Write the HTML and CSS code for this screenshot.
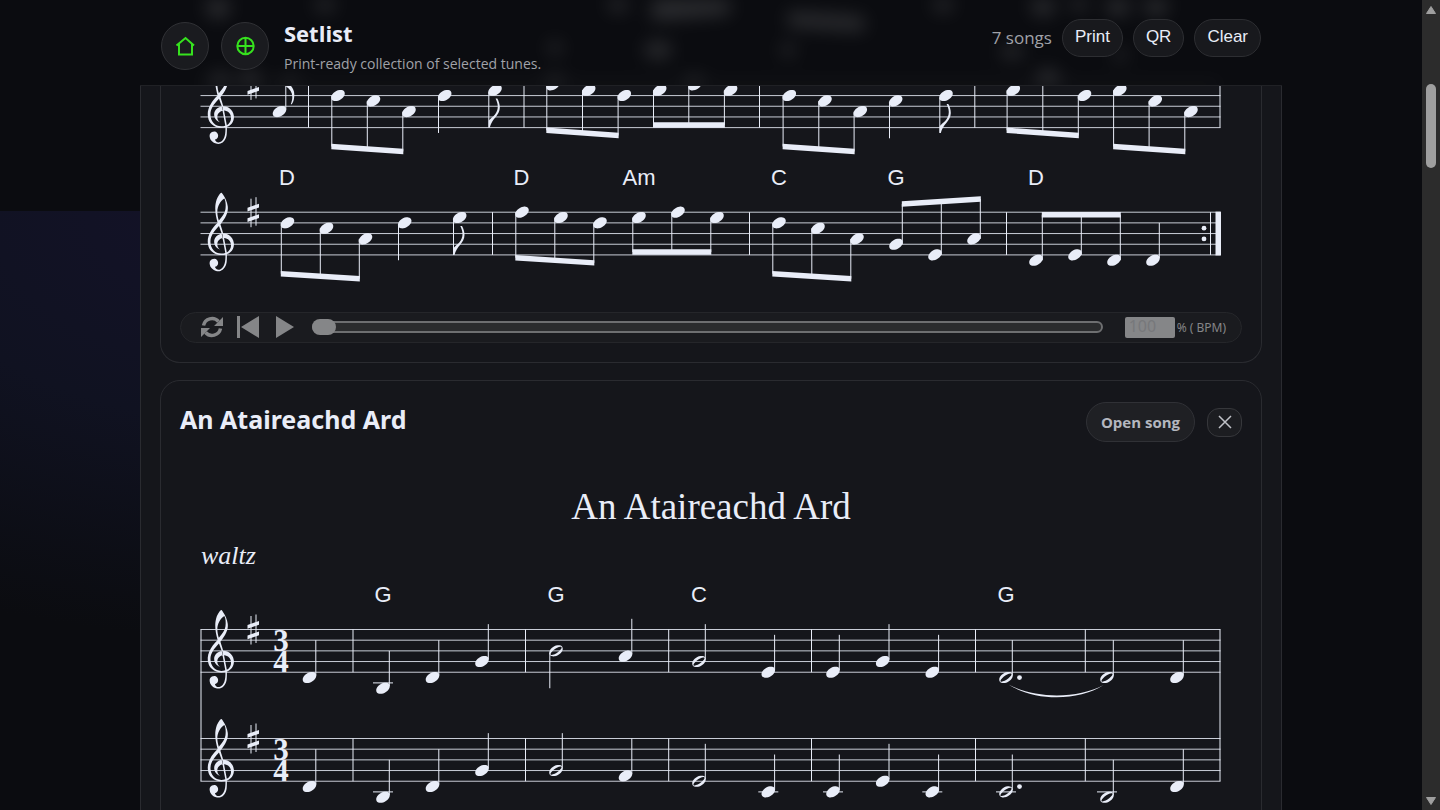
FILE: index.html
```html
<!DOCTYPE html>
<html lang="en">
<head>
  <meta charset="UTF-8">
  <meta name="viewport" content="width=device-width, initial-scale=1.0">
  <title>Setlist</title>
  <link rel="stylesheet" href="styles.css">
</head>
<body>
  <div class="app">
    <header class="topbar">
      <svg class="topbar-glow" viewBox="140 0 1142 85" preserveAspectRatio="none" aria-hidden="true">
        <circle cx="218" cy="6" r="12"/>
        <circle cx="325" cy="2" r="10"/>
        <circle cx="618" cy="2" r="10"/>
        <path d="M652 0h78v14l-78 6z"/>
        <path d="M788 12l76 5v14l-76-5z"/>
        <circle cx="943" cy="2" r="10"/>
        <circle cx="1043" cy="4" r="12"/>
        <circle cx="1079" cy="2" r="9"/>
        <circle cx="1118" cy="4" r="12"/>
        <circle cx="1156" cy="4" r="12"/>
        <ellipse cx="555" cy="48" rx="7" ry="6"/>
        <ellipse cx="658" cy="50" rx="14" ry="8"/>
        <ellipse cx="788" cy="50" rx="7" ry="6"/>
        <ellipse cx="1012" cy="52" rx="12" ry="6"/>
        <ellipse cx="1120" cy="55" rx="7" ry="5"/>
        <circle cx="220" cy="82" r="10"/>
        <circle cx="250" cy="80" r="10"/>
        <circle cx="290" cy="84" r="8"/>
        <circle cx="555" cy="84" r="9"/>
        <circle cx="694" cy="84" r="9"/>
        <circle cx="1048" cy="80" r="11"/>
        <rect x="200" y="83" width="1020" height="4"/>
      </svg>
      <button class="icon-btn" aria-label="Home">
        <svg viewBox="0 0 24 24"><path d="M3.500 11.500L12.500 4l8.500 7.500M6 10v10.500h13V10"/></svg>
      </button>
      <button class="icon-btn" aria-label="Add tunes">
        <svg viewBox="0 0 24 24"><circle cx="12.500" cy="12" r="8.200"/><path d="M12.500 3.500v17M4 12h17"/></svg>
      </button>
      <div class="heading">
        <h1>Setlist</h1>
        <p>Print-ready collection of selected tunes.</p>
      </div>
      <div class="actions">
        <span class="count">7 songs</span>
        <button class="pill">Print</button>
        <button class="pill">QR</button>
        <button class="pill">Clear</button>
      </div>
    </header>

    <main class="sheet">
      <article class="song song-cut">
        <svg class="score" id="score-first" viewBox="180 86 1062 226" role="img" aria-label="End of tune"></svg>
        <div class="player">
          <button class="ctrl" aria-label="Loop">
            <svg viewBox="0 0 22 22"><path class="arc" d="M2.500 9.500A8.700 8.700 0 0 1 17.500 5.500M19.500 12.500A8.700 8.700 0 0 1 4.500 16.500"/><path d="M22 1v9h-9zM0 21v-9h9z"/></svg>
          </button>
          <button class="ctrl" aria-label="Back to start">
            <svg viewBox="0 0 22 22"><path d="M0 0h3v22H0zM22 0v22L4 11z"/></svg>
          </button>
          <button class="ctrl" aria-label="Play">
            <svg viewBox="0 0 22 22"><path d="M3 0l18 11L3 22z"/></svg>
          </button>
          <input class="seek" type="range" min="0" max="100" value="0" aria-label="Position">
          <label class="tempo"><input type="text" value="100" aria-label="Tempo percent"><span>% ( BPM)</span></label>
        </div>
      </article>

      <article class="song">
        <div class="song-head">
          <h2>An Ataireachd Ard</h2>
          <a class="open" href="#song">Open song</a>
          <button class="remove" aria-label="Remove song">
            <svg viewBox="0 0 14 14"><path d="M1 1l12 12M13 1L1 13"/></svg>
          </button>
        </div>
        <svg class="score" id="score-ard" viewBox="180 442 1062 400" role="img" aria-label="An Ataireachd Ard"></svg>
      </article>
    </main>
  </div>

  <aside class="scrollbar" aria-hidden="true">
    <svg class="arrow" viewBox="0 0 12 10"><path d="M6 1.500L10.500 8.500h-9z"/></svg>
    <div class="thumb"></div>
    <svg class="arrow arrow-down" viewBox="0 0 12 10"><path d="M6 8.500L1.500 1.500h9z"/></svg>
  </aside>

  <script src="score.js"></script>
</body>
</html>
```
FILE: styles.css
```css
* {
  box-sizing: border-box;
}
body {
  margin: 0;
  height: 100vh;
  display: flex;
  overflow: hidden;
  background: #0b0c10;
  color: #e9edf8;
  font-family: "Open Sans", "Noto Sans", sans-serif;
}
button {
  font: inherit;
  color: inherit;
  padding: 0;
  cursor: pointer;
}
h1, h2, p {
  margin: 0;
}
.app {
  flex: 1;
  min-width: 0;
  height: 100vh;
  overflow: hidden;
  background: radial-gradient(780px 430px at 20% 0, #141229, #101221 50%, #0b0c10) 0 211px no-repeat;
}

/* top bar */
.topbar {
  position: relative;
  max-width: 1142px;
  height: 86px;
  margin: 0 auto;
  padding: 6px 21px 0;
  display: flex;
  align-items: center;
  gap: 12px;
  background: #0b0c10;
  border-bottom: 1px solid #202125;
}
.topbar-glow {
  position: absolute;
  inset: 0;
  width: 100%;
  height: 100%;
  fill: #fff;
  opacity: 0.14;
  filter: blur(9px);
  clip-path: inset(0);
}
.icon-btn {
  position: relative;
  width: 48px;
  height: 48px;
  border-radius: 50%;
  border: 1px solid #303135;
  background: #1a1b1f;
  display: grid;
  place-items: center;
}
.icon-btn svg {
  width: 24px;
  height: 24px;
  fill: none;
  stroke: #36e21e;
  stroke-width: 2;
}
.heading {
  position: relative;
  flex: 1;
  padding-left: 3px;
  align-self: flex-start;
}
.heading h1 {
  margin-top: 11px;
  font-size: 22px;
  line-height: 32px;
  font-weight: 700;
}
.heading p {
  margin-top: 7px;
  font-size: 14px;
  line-height: 16px;
  color: #a0a2a8;
}
.actions {
  position: relative;
  align-self: flex-start;
  margin-top: 13px;
  display: flex;
  align-items: center;
  gap: 10px;
}
.count {
  font-size: 17px;
  line-height: 24px;
  color: #a0a2a8;
}
.pill {
  height: 38px;
  padding: 0 12px 2px;
  border: 1px solid #2d2e32;
  border-radius: 19px;
  background: #18191d;
  font-family: "Liberation Sans", sans-serif;
  font-size: 17px;
}

/* sheet */
.sheet {
  max-width: 1142px;
  margin: 0 auto;
  padding: 0 19px;
  background: #15161b;
  border: solid #2a2b30;
  border-width: 0 1px;
}
.song {
  margin-top: 17px;
  padding: 21px 19px 19px;
  border: 1px solid #2a2b30;
  border-radius: 20px;
}
.song-cut {
  margin-top: 0;
  padding-top: 0;
  border-top: 0;
  border-radius: 0 0 20px 20px;
}
.song-head {
  display: flex;
  align-items: center;
  gap: 12px;
}
.song-head h2 {
  flex: 1;
  font-family: "Noto Sans", sans-serif;
  font-size: 25px;
  line-height: 34px;
  padding-bottom: 6px;
}
.open {
  height: 40px;
  padding: 0 14px;
  border: 1px solid #303136;
  border-radius: 20px;
  background: #1f2024;
  color: #b4b7bf;
  font-size: 15px;
  line-height: 38px;
  font-weight: 700;
  text-decoration: none;
}
.remove {
  width: 35px;
  height: 29px;
  border: 1px solid #36373b;
  border-radius: 12px;
  background: #1c1d21;
  display: grid;
  place-items: center;
}
.remove svg {
  width: 14px;
  height: 14px;
  fill: none;
  stroke: #c0c2c8;
  stroke-width: 1.5;
}

/* notation */
.score {
  display: block;
  width: 100%;
  height: auto;
  fill: #e9edf8;
}
.score .line {
  stroke: #e9edf8;
  stroke-width: 1;
  fill: none;
}
.score .staff-line {
  opacity: 0.85;
}
.score .chord {
  font: 22px "Liberation Sans", sans-serif;
  text-anchor: middle;
}
.score .meter {
  font: bold 31px "Liberation Serif", serif;
  text-anchor: middle;
}
.score .tune-title {
  font: 37px "Liberation Serif", serif;
  text-anchor: middle;
}
.score .rhythm {
  font: italic 26px "Liberation Serif", serif;
}

/* player */
.player {
  height: 31px;
  padding: 0 15px 1px 20px;
  display: flex;
  align-items: center;
  gap: 14px;
  border: 1px solid #25262a;
  border-radius: 16px;
  background: #1a1b1f;
}
.ctrl {
  width: 22px;
  height: 22px;
  border: 0;
  background: none;
}
.ctrl svg {
  display: block;
  fill: #858688;
}
.ctrl .arc {
  fill: none;
  stroke: #858688;
  stroke-width: 3.5;
}
.seek {
  flex: 1;
  min-width: 0;
  height: 16px;
  margin: 0 8px 0 3px;
  appearance: none;
  background: none;
}
.seek::-webkit-slider-runnable-track {
  height: 12px;
  border: 2px solid #6e6f71;
  border-radius: 6px;
  background: #2b2c2e;
}
.seek::-webkit-slider-thumb {
  appearance: none;
  width: 24px;
  height: 16px;
  margin: -4px 0 0 -2px;
  border-radius: 8px;
  background: #858688;
}
.tempo {
  display: flex;
  align-items: center;
  gap: 2px;
  font: 12px "Noto Sans", sans-serif;
  color: #858688;
}
.tempo input {
  width: 50px;
  height: 21px;
  padding: 0 4px 3px;
  border: 0;
  border-radius: 2px;
  background: #858688;
  color: #77787b;
  font: 16px "Noto Sans", sans-serif;
}

/* scrollbar */
.scrollbar {
  width: 18px;
  height: 100vh;
  padding: 5px 0 4px;
  display: flex;
  flex-direction: column;
  align-items: center;
  background: #2c2c2c;
}
.arrow {
  width: 12px;
  height: 10px;
  fill: #9f9f9f;
  stroke: #9f9f9f;
  stroke-width: 1;
  stroke-linejoin: round;
}
.arrow-down {
  margin-top: auto;
}
.thumb {
  width: 10px;
  height: 84px;
  margin-top: 69px;
  border-radius: 5px;
  background: #9f9f9f;
}
```
FILE: score.js
```js
const NS = "http://www.w3.org/2000/svg";
const GAP = 10.68;
const STEP = GAP / 2;
const LEFT = 200.5;
const RIGHT = 1220.5;

const CLEF = "M9.69-37.41c.09-.09.24-.06.36 0c.12.09.57.6.96 1.110c1.770 2.340 3.210 5.850 3.570 8.730c.21 1.560.03 3.270-.45 4.860c-.69 2.310-1.920 4.470-4.230 7.440c-.3.39-.57.72-.6.75c-.03.06 0 .15.18.78c.54 1.680 1.380 4.440 1.680 5.490l.09.42l.39 0c1.470.09 2.760.51 3.960 1.290c1.830 1.230 3.060 3.210 3.390 5.520c.09.45.12 1.290.06 1.740c-.09 1.020-.33 1.830-.75 2.730c-.84 1.710-2.280 3.060-4.020 3.720l-.33.12l.03 1.260c0 1.740-.06 3.630-.21 4.620c-.45 3.060-2.190 5.490-4.470 6.210c-.57.18-.9.21-1.590.21c-.69 0-1.020-.03-1.650-.21c-1.140-.27-2.130-.84-2.940-1.650c-.99-.99-1.560-2.160-1.710-3.540c-.09-.81.06-1.530.45-2.130c.63-.99 1.830-1.560 3-1.530c1.500.09 2.640 1.320 2.730 2.940c.06 1.470-.93 2.700-2.370 2.970"
  + "C5.900 18.400 7.600 18.900 9 18.300C11.800 17.200 13.100 13.500 12.900 7.560C7 8.900 2.200 6 .7 2C-1.500-4.500 2-10.500 7.200-15.600C6.200-19.500 5.500-22.500 5.500-26C5.500-30.800 7-35 9.690-37.410z"
  + "M12.100-33.200C9.300-31.500 7-27.500 7-23.500C7-21.500 7.500-19.200 8.100-17.300C10.400-20 12.500-22.500 12.900-25.500C13.300-28.500 13.100-31.500 12.100-33.200z"
  + "M8.200-13.200C4.400-9.200 2-6 2-1.800C2 3.300 5.400 6.800 9.800 6.800C10.900 6.800 11.900 6.700 12.800 6.400L10.200-7.700z"
  + "M10.600-7.800C6.700-7.100 4.700-4.600 4.700-1.800C4.700.8 6.300 2.900 8.900 3.900C7.600 2.800 7 1.600 7 .2C7-2.300 8.600-4.100 11-4.500z"
  + "M11.900-4.600C14.800-4.400 17-2.300 17 .8C17 3.200 15.600 5 13.900 6z";
const HEAD = "M6.090-4.050c.36-.03 1.200 0 1.530.06c1.170.24 1.890.84 2.160 1.830c.06.18.06.3.06.66c0 .45 0 .63-.15 1.080c-.66 2.040-3.060 3.930-5.520 4.380c-.54.09-1.440.09-1.830.03c-1.230-.27-1.980-.87-2.250-1.860c-.06-.18-.06-.3-.06-.66c0-.45 0-.63.15-1.080c.24-.78.75-1.530 1.440-2.220c1.200-1.200 2.850-2.010 4.470-2.220z";
const HALF_HOLE = "M9-2.700C9.700-1.200 3.200 3.900 1 2.900C0 1.400 7.100-4.300 9-2.700z";

function add(svg, tag, attrs, text) {
  const el = document.createElementNS(NS, tag);
  for (const key in attrs) el.setAttribute(key, attrs[key]);
  if (text) el.textContent = text;
  svg.appendChild(el);
  return el;
}
function line(svg, x1, y1, x2, y2, extra) {
  add(svg, "path", { class: "line " + (extra || ""), d: `M${x1} ${y1}L${x2} ${y2}` });
}
function glyph(svg, d, x, y) {
  add(svg, "path", { d, "fill-rule": "evenodd", transform: `translate(${x} ${y}) scale(1.375)` });
}
function head(svg, top, x, pos, half) {
  const y = top + pos * STEP;
  glyph(svg, half ? HEAD + HALF_HOLE : HEAD, x - 6.8, y);
  for (let p = 10; p <= pos; p += 2) {
    line(svg, x - 10, top + p * STEP, x + 10, top + p * STEP);
  }
  return y;
}
function staff(svg, top, bars, meter) {
  for (let i = 0; i < 5; i++) {
    line(svg, LEFT, top + i * GAP, RIGHT, top + i * GAP, "staff-line");
  }
  bars.forEach(x => line(svg, x, top, x, top + 4 * GAP));
  glyph(svg, CLEF, 207.7, top + 3 * GAP);
  line(svg, 251, top - 13.5, 251, top + 15);
  line(svg, 256, top - 15, 256, top + 13.5);
  add(svg, "path", { d: `M247.500 ${top - 4.500}l11.500-4v3.800l-11.500 4zM247.500 ${top + 6}l11.500-4v3.800l-11.500 4z` });
  if (meter) {
    const text = add(svg, "text", { class: "meter" });
    add(text, "tspan", { x: 281, y: top + 21 }, meter[0]);
    add(text, "tspan", { x: 281, y: top + 42.500 }, meter[1]);
  }
}
// single note, dir is "up" or "down"
function note(svg, top, x, pos, dir, opts = {}) {
  const y = head(svg, top, x, pos, opts.half);
  const up = dir === "up";
  const sx = up ? x + 6.300 : x - 6.200;
  const end = y + (up ? -7 : 7) * STEP;
  line(svg, sx, y + (up ? -2 : 2), sx, end);
  if (opts.flag && up) {
    add(svg, "path", { d: `M${sx} ${end}c0 9 8.500 12 8.500 20c0 4-.5 7-2.500 10h-1c3-8 1.500-14-5-18z` });
  } else if (opts.flag) {
    add(svg, "path", { d: `M${sx} ${end}v-7c4-4 9-7 9-14c0-3-1.200-6-2.200-8h1.700c1.500 2.500 2.500 5.500 2.500 9c0 8-8 11-10 20z` });
  }
  if (opts.dot) add(svg, "circle", { cx: x + 13.500, cy: top + 9 * STEP, r: 2.400 });
}
// three beamed notes, y1 and y2 are the beam's ends
function beam(svg, top, notes, y1, y2, dir = "down") {
  const dx = dir === "up" ? 6.300 : -6.200;
  const x1 = notes[0][0] + dx;
  const x2 = notes[notes.length - 1][0] + dx;
  notes.forEach(([x, pos]) => {
    const y = head(svg, top, x, pos);
    const by = y1 + (y2 - y1) * (x + dx - x1) / (x2 - x1);
    line(svg, x + dx, y, x + dx, by);
  });
  add(svg, "path", { d: `M${x1 - .5} ${y1 - 2.700}L${x2 + .5} ${y2 - 2.700}v5.400L${x1 - .5} ${y1 + 2.700}z` });
}
function chords(svg, y, list) {
  list.forEach(([x, name]) => add(svg, "text", { class: "chord", x, y }, name));
}

function drawFirst() {
  const svg = document.getElementById("score-first");
  let t = 84.900;
  staff(svg, t, [308.500, 524, 759.500, 974.800, 1220]);
  note(svg, t, 279.500, 5, "up", { flag: true });
  beam(svg, t, [[338, 2], [373.500, 3], [409, 5]], 146.500, 151.500);
  note(svg, t, 444.700, 2, "down");
  note(svg, t, 495, 1, "down", { flag: true });
  beam(svg, t, [[553, 0], [588.700, 1], [624.300, 2]], 130.300, 135.500);
  beam(svg, t, [[659.700, 1], [695, 0], [730.600, 1]], 125, 125);
  beam(svg, t, [[789.300, 2], [825, 3], [860.300, 5]], 146.500, 151.500);
  note(svg, t, 895.700, 3, "down");
  note(svg, t, 946, 2, "down", { flag: true });
  beam(svg, t, [[1013.300, 1], [1049, -1], [1084.500, 2]], 130.300, 135.500);
  beam(svg, t, [[1119.800, 1], [1155.300, 3], [1191, 5]], 146.500, 151.500);

  chords(svg, 185, [[287, "D"], [521.500, "D"], [639, "Am"], [779, "C"], [896, "G"], [1036, "D"]]);
  t = 212.200;
  staff(svg, t, [492.500, 749.500, 1006.500, 1210.500]);
  beam(svg, t, [[287.500, 2], [326.500, 3], [365.500, 5]], 273.700, 278.700);
  note(svg, t, 404.700, 2, "down");
  note(svg, t, 459.700, 1, "down", { flag: true });
  beam(svg, t, [[522, 0], [561, 1], [600, 2]], 257.700, 262.900);
  beam(svg, t, [[639, 1], [678, 0], [717, 1]], 252, 252);
  beam(svg, t, [[779, 2], [818, 3], [857, 5]], 273.700, 278.700);
  beam(svg, t, [[896, 6], [935, 8], [974, 5]], 204, 199, "up");
  beam(svg, t, [[1036, 9], [1075, 8], [1114, 9]], 214.700, 214.700, "up");
  note(svg, t, 1153, 9, "up");
  add(svg, "circle", { cx: 1204, cy: t + 3 * STEP, r: 2.400 });
  add(svg, "circle", { cx: 1204, cy: t + 5 * STEP, r: 2.400 });
  add(svg, "rect", { x: 1215.500, y: t - .5, width: 5.500, height: 4 * GAP + 1 });
}

function drawArd() {
  const svg = document.getElementById("score-ard");
  const bars = [353, 525.500, 668.700, 811.500, 975.500, 1085.300];
  const xs = [309.500, 383, 432.500, 482, 556, 625.500, 699, 768.300, 833, 882.700, 932.300, 1006, 1107, 1177];
  const halves = [4, 6, 11, 12];
  const voices = [
    { top: 629.500, pos: [9, 11, 9, 6, 4, 5, 6, 8, 8, 6, 8, 9, 9, 9] },
    { top: 738.500, pos: [9, 11, 9, 6, 6, 7, 8, 10, 10, 8, 10, 10, 11, 9] }
  ];
  add(svg, "text", { class: "tune-title", x: 711, y: 519 }, "An Ataireachd Ard");
  add(svg, "text", { class: "rhythm", x: 201, y: 564 }, "waltz");
  chords(svg, 602, [[383, "G"], [556, "G"], [699, "C"], [1006, "G"]]);
  voices.forEach(v => {
    staff(svg, v.top, bars, ["3", "4"]);
    v.pos.forEach((pos, i) => {
      const dir = pos <= 4 ? "down" : "up";
      note(svg, v.top, xs[i], pos, dir, { half: halves.includes(i), dot: i === 11 });
    });
  });
  line(svg, 201, 629.500, 201, 781.200);
  line(svg, 1220, 629.500, 1220, 781.200);
  add(svg, "path", { d: "M1008.500 684.500C1035 699 1078 699 1103.500 685C1078 701.500 1035 701.500 1008.500 684.500z" });
}

drawFirst();
drawArd();
```
